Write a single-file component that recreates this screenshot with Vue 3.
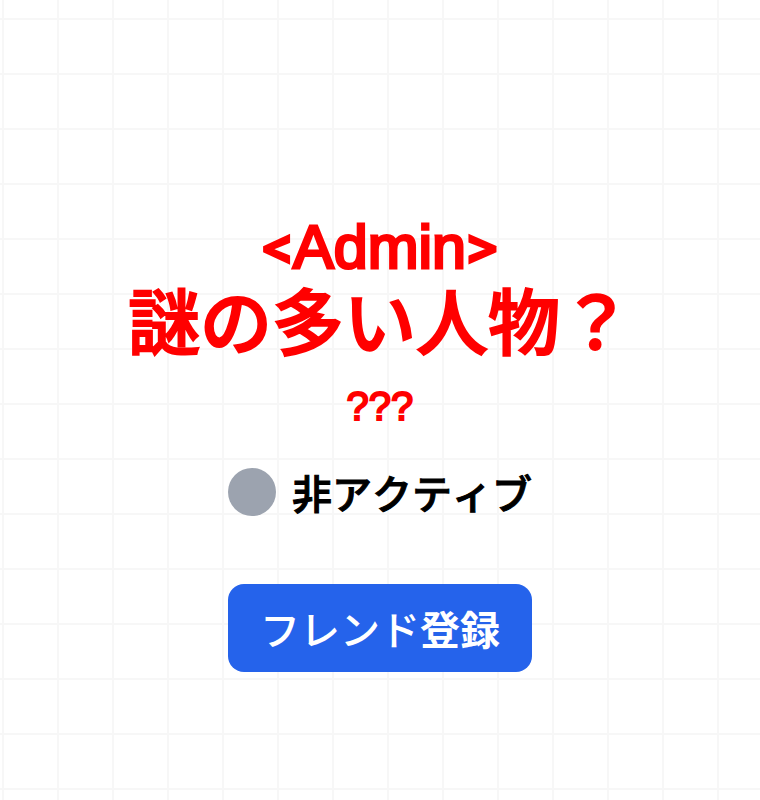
<script setup>
import { ref } from 'vue'

const requested = ref(false)
</script>

<template>
  <main class="page">
    <section class="profile">
      <h1 class="name">
        <span class="role"><span class="bracket">&lt;</span>Admin<span class="bracket">&gt;</span></span>
        <span class="title">謎の多い人物？</span>
      </h1>
      <p class="handle">???</p>
      <div class="status">
        <span class="dot"></span>
        <span>非アクティブ</span>
      </div>
      <button class="add" type="button" @click="requested = true">フレンド<span class="kanji">登録</span></button>
    </section>
  </main>
</template>

<style>
body {
  margin: 0;
  background: #ffffff;
}
</style>

<style scoped>
.page {
  box-sizing: border-box;
  min-height: 100vh;
  display: flex;
  justify-content: center;
  align-items: center;
  padding: 118px 32px 32px;
  background-color: #ffffff;
  background-image:
    linear-gradient(to right, #f7f7f7 2px, transparent 2px),
    linear-gradient(to bottom, #f7f7f7 2px, transparent 2px);
  background-size: 55px 55px;
  background-position: 2px 18px;
  font-family: "Liberation Sans", "Noto Sans CJK JP", sans-serif;
  font-kerning: none;
  color: #000000;
}
.profile {
  display: flex;
  flex-direction: column;
  align-items: center;
  text-align: center;
}
.name {
  margin: 0;
  display: flex;
  flex-direction: column;
  align-items: center;
  color: #ff0000;
  font-weight: 400;
}
.role {
  margin-bottom: 8px;
  font-size: 61px;
  line-height: 64px;
  -webkit-text-stroke: 3px currentColor;
}
.bracket {
  font-family: Roboto, sans-serif;
  font-size: 60px;
}
.title {
  font-size: 72px;
  font-weight: 500;
  line-height: 72px;
  -webkit-text-stroke: 2px currentColor;
}
.handle {
  margin: 16px 0 0;
  color: #ff0000;
  font-size: 40px;
  line-height: 60px;
  -webkit-text-stroke: 2px currentColor;
}
.status {
  display: flex;
  align-items: center;
  gap: 16px;
  margin-top: 28px;
  font-family: "Noto Sans CJK JP", sans-serif;
  font-size: 40px;
  font-weight: 500;
  line-height: 56px;
  -webkit-text-stroke: 1px currentColor;
}
.dot {
  width: 48px;
  height: 48px;
  border-radius: 50%;
  background: #9ca3af;
}
.add {
  margin-top: 64px;
  padding: 16px 32px;
  border: 0;
  border-radius: 16px;
  background: #2563eb;
  color: #ffffff;
  font-family: "Noto Sans CJK JP", sans-serif;
  font-size: 40px;
  font-weight: 500;
  line-height: 56px;
  cursor: pointer;
}
.kanji {
  font-weight: 700;
}
</style>
